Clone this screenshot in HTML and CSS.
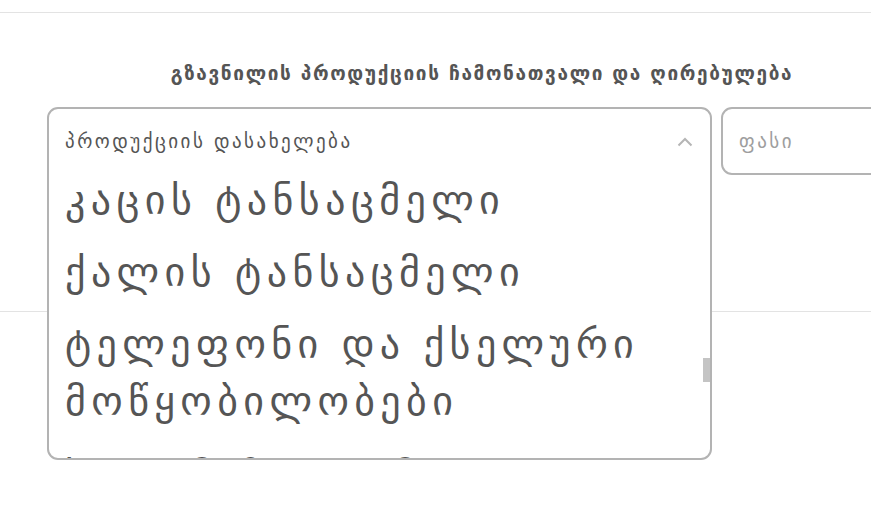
FILE: index.html
```html
<!DOCTYPE html>
<html lang="ka">
<head>
<meta charset="utf-8">
<title>პროდუქცია</title>
<link rel="stylesheet" href="styles.css">
</head>
<body>
<div class="page">
  <div class="topbar"></div>
  <section class="section">
    <div class="container">
      <h2 class="title">გზავნილის პროდუქციის ჩამონათვალი და ღირებულება</h2>
      <div class="row">
        <div class="select-wrap">
          <div class="select-box">
            <div class="select-head">
              <span class="placeholder">პროდუქციის დასახელება</span>
              <svg class="chev" width="16" height="10" viewBox="0 0 16 10"><path d="M1.5 8.5 L8 2 L14.5 8.5" fill="none" stroke="#b5b5b5" stroke-width="2"/></svg>
            </div>
            <div class="options">
              <div class="option">კაცის ტანსაცმელი</div>
              <div class="option">ქალის ტანსაცმელი</div>
              <div class="option">ტელეფონი და ქსელური მოწყობილობები</div>
              <div class="option">სილამაზე და მოვლა</div>
            </div>
            <div class="thumb"></div>
          </div>
        </div>
        <div class="price">
          <span class="price-ph">ფასი</span>
        </div>
      </div>
    </div>
  </section>
</div>
</body>
</html>
```
FILE: styles.css
```css
html {
  overflow: hidden;
}
html, body {
  margin: 0;
  padding: 0;
  background: #ffffff;
  font-family: "DejaVu Sans", sans-serif;
}
.page {
  min-height: 508px;
  width: 871px;
  overflow: hidden;
}
.topbar {
  height: 12px;
  border-bottom: 1px solid #e3e3e3;
}
.section {
  height: 298px;
  border-bottom: 1px solid #e3e3e3;
}
.container {
  width: 870px;
  margin-left: 47px;
  padding-top: 47px;
}
.title {
  margin: 0 0 21px 0;
  text-align: center;
  font-size: 19px;
  letter-spacing: 1.65px;
  font-weight: bold;
  color: #555555;
  line-height: 26px;
  white-space: nowrap;
}
.row {
  display: flex;
  gap: 9px;
}
.select-wrap {
  position: relative;
  width: 665px;
  height: 68px;
  flex: none;
}
.select-box {
  position: absolute;
  top: 0;
  left: 0;
  right: 0;
  height: 353px;
  box-sizing: border-box;
  border: 2px solid #b3b3b3;
  border-radius: 11px;
  background: #ffffff;
  overflow: hidden;
  z-index: 5;
}
.select-head {
  height: 64px;
  display: flex;
  align-items: center;
  justify-content: space-between;
  padding: 0 17px 0 16px;
}
.placeholder {
  font-size: 19px;
  letter-spacing: 2.5px;
  color: #555555;
}
.chev {
  display: block;
  margin-top: 1px;
}
.options {
  padding: 0 40px 0 16px;
}
.option {
  font-size: 40px;
  letter-spacing: 5.4px;
  color: #555555;
  line-height: 57px;
  padding-bottom: 15px;
}
.option:first-child {
  margin-top: -1px;
}
.option:last-child {
  padding-top: 3px;
}
.thumb {
  position: absolute;
  right: 0;
  top: 249px;
  width: 7px;
  height: 24px;
  background: #c4c4c4;
}
.price {
  flex: 1;
  height: 68px;
  box-sizing: border-box;
  border: 2px solid #b3b3b3;
  border-radius: 11px;
  display: flex;
  align-items: center;
  padding-left: 16px;
}
.price-ph {
  font-size: 19px;
  letter-spacing: 2.5px;
  color: #9e9e9e;
}
```
